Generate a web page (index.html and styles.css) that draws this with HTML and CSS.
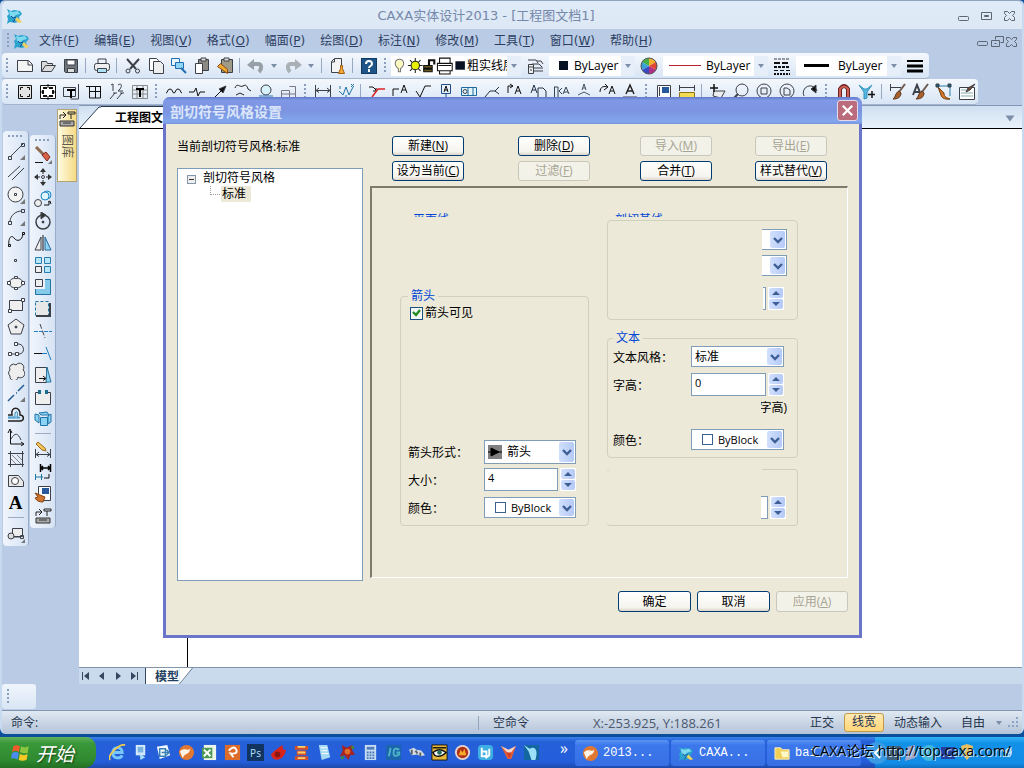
FILE: index.html
```html
<!DOCTYPE html>
<html lang="zh-CN">
<head>
    <meta charset="UTF-8">
    <meta name="viewport" content="width=device-width, initial-scale=1.0">
    <title>CAXA实体设计2013</title>
    <link rel="stylesheet" href="styles.css">
</head>
<body>

<!-- Shared shapes -->
<svg class="defs" aria-hidden="true">
    <symbol id="logo" viewBox="0 0 18 18">
        <path d="M1 2l4 2 3-1 6 1 2 3-3 3 1 4-5 2-5-1-3 2 1-5-1-3 2-2z" fill="#2aa3cf"/>
        <path d="M3 4l4 1 5-1 2 3-4 1-3 3-3-2z" fill="#7fd8ee"/>
        <path d="M5 9l2 2 3-1M9 12l-2 3" stroke="#134b8c" fill="none"/>
        <path d="M11 10l5 5-3 1-4-3z" fill="#f0d060"/>
    </symbol>
    <symbol id="down" viewBox="0 0 10 8"><path d="M1 2l4 4 4-4" stroke="#3d5f95" stroke-width="2.4" fill="none"/></symbol>
    <symbol id="caret" viewBox="0 0 8 6"><path d="M1 1h6L4 5z" fill="#7c8ea8"/></symbol>
    <symbol id="tri-up" viewBox="0 0 8 4"><path d="M0 4l4-4 4 4z" fill="#3d5f95"/></symbol>
    <symbol id="tri-down" viewBox="0 0 8 4"><path d="M0 0l4 4 4-4z" fill="#3d5f95"/></symbol>
    <symbol id="brush" viewBox="0 0 18 18"><path d="M16 1l-6 8" stroke="#6c5a50" stroke-width="2"/><path d="M10 8l2 2c0 4-3 6-8 6 3-2 2-6 6-8z" fill="#a8602c" stroke="#5a341a"/></symbol>
    <symbol id="folder" viewBox="0 0 18 18"><path d="M1 3h6l2 2h7v10H1z" fill="#f2cf55" stroke="#f8f0c0"/><path d="M7 7h8v6H9z" fill="#fff8c8"/></symbol>
    <symbol id="lib" viewBox="0 0 18 18"><path d="M2 9V5h5M5 2l3 3-3 3M10 2h7v2h-7zM13 4v5" stroke="#222"/><path d="M2 11h14v5H2z" fill="#aaa" stroke="#333"/><path d="M5 13h8" stroke="#333"/></symbol>
</svg>

<div class="app">
    <!-- Title bar -->
    <header class="titlebar">
        <svg class="icon"><use href="#logo"/></svg>
        <h1>CAXA实体设计2013 - [工程图文档1]</h1>
        <div class="win-buttons">
            <button aria-label="最小化"><svg class="icon" viewBox="0 0 18 18"><rect x="4.500" y="9.500" width="10" height="4" rx="1"/></svg></button>
            <button aria-label="还原"><svg class="icon" viewBox="0 0 18 18"><path d="M4.500 5.500h10v7h-10zM7.500 8.500h4v1h-4z"/></svg></button>
            <button aria-label="关闭"><svg class="icon" viewBox="0 0 18 18"><path d="M4.500 4.500h3l2 2 2-2h3v2l-2 2 2 2v3h-3l-2-2-2 2h-3v-3l2-2-2-2z"/></svg></button>
        </div>
    </header>

    <!-- Menu -->
    <nav class="menubar">
        <i class="grip"></i>
        <svg class="icon"><use href="#logo"/></svg>
        <button>文件(<u>F</u>)</button>
        <button>编辑(<u>E</u>)</button>
        <button>视图(<u>V</u>)</button>
        <button>格式(<u>O</u>)</button>
        <button>幅面(<u>P</u>)</button>
        <button>绘图(<u>D</u>)</button>
        <button>标注(<u>N</u>)</button>
        <button>修改(<u>M</u>)</button>
        <button>工具(<u>T</u>)</button>
        <button>窗口(<u>W</u>)</button>
        <button>帮助(<u>H</u>)</button>
        <div class="win-buttons small">
            <button aria-label="最小化文档"><svg class="icon" viewBox="2 1 15 15"><rect x="4.500" y="8.500" width="10" height="4" rx="1"/></svg></button>
            <button aria-label="还原文档"><svg class="icon" viewBox="2 1 15 15"><path d="M7.500 3.500h8v6h-3M7.500 3.500v3M3.500 7.500h8v6h-8zM6.500 10.500h2"/></svg></button>
            <button aria-label="关闭文档"><svg class="icon" viewBox="2 1 15 15"><path d="M3.500 4.500h3l2 2 2-2h3v2l-2 2 2 2v3h-3l-2-2-2 2h-3v-3l2-2-2-2z"/></svg></button>
        </div>
    </nav>

    <!-- Standard and property toolbars -->
    <div class="toolbar">
        <i class="grip"></i>
        <button class="tool" aria-label="新建"><svg class="icon" viewBox="0 0 18 18"><path d="M1.500 3.500h11l4 4v7h-15z" fill="#f4f4f4"/><path d="M12 4v4h4"/></svg></button>
        <button class="tool" aria-label="打开"><svg class="icon" viewBox="0 0 18 18"><path d="M2.500 14.500v-10h5l1 2h5v2M2.500 14.500l4-6h10l-4 6z" fill="#dcdcdc"/></svg></button>
        <button class="tool" aria-label="保存"><svg class="icon" viewBox="0 0 18 18"><path d="M2.500 2.500h13v13h-12l-1-1z" fill="#70757d"/><path d="M5 3h8v5H5z" fill="#fff"/><path d="M5.500 11.500h7v4h-7z" fill="#ddd"/></svg></button>
        <i class="sep"></i>
        <button class="tool" aria-label="打印"><svg class="icon" viewBox="0 0 18 18"><path d="M5 6V2h8v4"/><rect x="1.500" y="6.500" width="15" height="7" rx="2" fill="#eee"/><path d="M4.500 11.500h9v4h-9z" fill="#aee1f4"/></svg></button>
        <i class="sep"></i>
        <button class="tool" aria-label="剪切"><svg class="icon" viewBox="0 0 18 18"><path d="M3 2l9 10M15 2L6 12" stroke-width="2"/><circle cx="4" cy="14" r="2"/><circle cx="13.500" cy="14" r="2"/></svg></button>
        <button class="tool" aria-label="复制"><svg class="icon" viewBox="0 0 18 18"><path d="M2.500 1.500h7l2 2v10h-9z" fill="#fff"/><path d="M6.500 4.500h7l3 3v9h-10z" fill="#eee"/></svg></button>
        <button class="tool" aria-label="带基点复制"><svg class="icon" viewBox="0 0 18 18"><g stroke="#1e6eb4"><path d="M1.500 1.500h8v7h-8z" fill="#e8f6ff"/><path d="M5.500 5.500h8v6h-8z" fill="#8fd6f6"/><path d="M11 11l5 5" stroke-width="2"/></g></svg></button>
        <button class="tool" aria-label="粘贴"><svg class="icon" viewBox="0 0 18 18"><path d="M5.500 2.500h10v11h-10z" fill="#8d8a84"/><path d="M8 1h5v3H8z" fill="#ddd"/><path d="M2.500 6.500h7v10h-7z" fill="#fff"/></svg></button>
        <button class="tool" aria-label="选择性粘贴"><svg class="icon" viewBox="0 0 18 18"><path d="M5.500 2.500h11v13h-11z" fill="#a09a88"/><path d="M8 1h5v3H8z" fill="#ddd"/><path d="M1.500 9.500l3-3 7 6v4z" fill="#f0a830" stroke="#8a4a10"/></svg></button>
        <i class="sep"></i>
        <button class="tool" aria-label="撤销"><svg class="icon" viewBox="0 0 18 18"><path d="M3 7h8c4 0 4 5 1 8" stroke="#97a0a6" stroke-width="4"/><path d="M0 8l7-6v11z" fill="#97a0a6" stroke="none"/></svg></button>
        <button class="drop" aria-label="撤销列表"><svg><use href="#caret"/></svg></button>
        <button class="tool" aria-label="重做"><svg class="icon" viewBox="0 0 18 18"><path d="M15 7H7c-4 0-4 5-1 8" stroke="#a9b1b6" stroke-width="4"/><path d="M18 8l-7-6v11z" fill="#a9b1b6" stroke="none"/></svg></button>
        <button class="drop" aria-label="重做列表"><svg><use href="#caret"/></svg></button>
        <i class="sep"></i>
        <button class="tool" aria-label="格式刷"><svg class="icon" viewBox="0 0 18 18"><path d="M2.500 4.500l3-3h7v14h-10z" fill="#f4f4f4"/><path d="M5.500 2v3h-3"/><path d="M11.500 8.500h2v3l2 5h-6l2-5z" fill="#f3a83a" stroke="#a55f10"/></svg></button>
        <i class="sep"></i>
        <button class="tool" aria-label="帮助"><svg class="icon" viewBox="0 0 18 18"><rect x="1.500" y="1.500" width="15" height="15" fill="#1e5487" stroke="#123a62"/><path d="M6 7c0-4 6-4 6 0 0 2-3 2-3 4M9 12v3" stroke="#fff" stroke-width="2"/></svg></button>
        <i class="grip"></i>
        <div class="layer-box">
            <svg class="layer-icons" viewBox="0 0 72 18">
                <path d="M7 12C2 8 4 3 8 3s6 5 1 9v3H7z" fill="#fbf9c0" stroke="#777"/>
                <g stroke="#222"><path d="M23 2v14M16 9h14M18 4l10 10M28 4L18 14"/><circle cx="23" cy="9" r="4" fill="#e8f000"/></g>
                <path d="M31 9h8v6h-8z" fill="#6b5b20" stroke="#111"/><path d="M36 9V4h5v4M31 12h8" stroke="#111" stroke-width="2"/>
                <path d="M46 7V2h10v5M44 7h14v7H44zM46 14v3h10v-3" fill="#fff" stroke="#111"/><path d="M45 9h12" stroke="#111"/>
                <path d="M61 5h9v8h-9z" fill="#071122" stroke="none"/>
            </svg>
            <select aria-label="图层"><option>粗实线层</option></select>
            <span class="drop"><svg><use href="#caret"/></svg></span>
        </div>
        <button class="tool wide" aria-label="图层设置"><svg class="icon" viewBox="0 0 18 18"><path d="M2 3h8l2 3M6 7h7l3 3M8 11h9M8 14h9M11 4h4l2 3"/><path d="M2.500 7.500h5v9h-5zM2 10h6M4 13h2" fill="#eee"/></svg></button>
        <div class="prop-box color-box">
            <i class="swatch black"></i>
            <select aria-label="颜色"><option>ByLayer</option></select>
            <span class="drop"><svg><use href="#caret"/></svg></span>
        </div>
        <button class="tool wide" aria-label="颜色"><svg class="icon" viewBox="0 0 18 18"><g stroke="none"><path d="M9 9V1a8 8 0 0 1 7 4z" fill="#f0b030"/><path d="M9 9l7-4a8 8 0 0 1 0 8z" fill="#e04a32"/><path d="M9 9l7 4a8 8 0 0 1-7 4z" fill="#b03088"/><path d="M9 9v8a8 8 0 0 1-7-4z" fill="#3a4ac0"/><path d="M9 9l-7 4a8 8 0 0 1 0-8z" fill="#3aa0d8"/><path d="M9 9L2 5a8 8 0 0 1 7-4z" fill="#48b048"/></g><circle cx="9" cy="9" r="8" stroke="#555"/></svg></button>
        <div class="prop-box">
            <i class="line red"></i>
            <select aria-label="线型"><option>ByLayer</option></select>
            <span class="drop"><svg><use href="#caret"/></svg></span>
        </div>
        <button class="tool wide" aria-label="线型"><svg class="icon" viewBox="0 0 18 18"><path d="M1 2h16" stroke-dasharray="3 1"/><path d="M1 6h16" stroke="#111" stroke-width="2" stroke-dasharray="6 2"/><path d="M1 10h16" stroke="#111" stroke-width="2" stroke-dasharray="3 1"/><path d="M1 13.500h16" stroke="#111" stroke-dasharray="4 2"/><path d="M1 17h16" stroke="#111" stroke-width="2" stroke-dasharray="2 1"/></svg></button>
        <div class="prop-box">
            <i class="line thick"></i>
            <select aria-label="线宽"><option>ByLayer</option></select>
            <span class="drop"><svg><use href="#caret"/></svg></span>
        </div>
        <button class="tool wide" aria-label="线宽"><svg class="icon" viewBox="0 0 18 18"><g stroke="#000"><path d="M1 4h16" stroke-width="2"/><path d="M1 9h16" stroke-width="3"/><path d="M1 14h16" stroke-width="3"/></g></svg></button>
    </div>

    <!-- Drawing frame, curves and dimension toolbars -->
    <div class="toolbar">
        <i class="grip"></i>
        <button class="tool" aria-label="图幅"><svg class="icon" viewBox="0 0 18 18"><path d="M2.500 2.500h13v13h-13z" fill="#e4e4e4" stroke="#111"/><path d="M4.500 7V4.500H7M11 4.500h2.500V7M13.500 11v2.500H11M7 13.500H4.500V11" stroke="#111"/></svg></button>
        <button class="tool" aria-label="图框"><svg class="icon" viewBox="0 0 18 18"><path d="M1.500 2.500h15v13h-15z" fill="#fff" stroke="#111"/><path d="M4 5h10v8H4z" stroke="#111" stroke-width="2" stroke-dasharray="4 2"/><path d="M9 1v4M9 13v4M1 9h3M14 9h3" stroke="#111"/></svg></button>
        <button class="tool" aria-label="标题栏"><svg class="icon" viewBox="0 0 18 18"><path d="M1.500 4.500h12v9h-12zM16.500 1v15h-8"/><path d="M5 7h8M9 7v8" stroke="#000" stroke-width="2"/></svg></button>
        <button class="tool" aria-label="参数栏"><svg class="icon" viewBox="0 0 18 18"><path d="M1 3.500h15M4.500 4v11h11V4M10.500 4v11M4 8.500h12" stroke="#111"/></svg></button>
        <button class="tool" aria-label="序号"><svg class="icon" viewBox="0 0 18 18"><path d="M3 2l2-1v7M10 2c4-3 5 2 0 6h5M7 10l-5 6M14 10l-5 6M5 10h4M12 10h4"/></svg></button>
        <button class="tool" aria-label="明细表"><svg class="icon" viewBox="0 0 18 18"><path d="M1.500 2.500h15v13h-15zM1 7h15M1 11h15M6 3v12M12 3v12" stroke="#8a8a8a"/><path d="M5 6h8M9 6v8" stroke="#000" stroke-width="2"/></svg></button>
        <i class="grip"></i>
        <button class="tool" aria-label="波浪线"><svg class="icon" viewBox="0 0 18 18"><path d="M1 10c2 0 1-4 4-4s2 4 4 4 1-4 4-4 2 4 4 4" stroke="#111"/></svg></button>
        <button class="tool" aria-label="双折线"><svg class="icon" viewBox="0 0 18 18"><path d="M1 9h5l2-4 2 8 2-4h5" stroke="#111"/></svg></button>
        <button class="tool" aria-label="箭头"><svg class="icon" viewBox="0 0 18 18"><path d="M3 15l7-7" stroke="#111"/><path d="M15 3l-3 7-4-4z" fill="#111"/></svg></button>
        <button class="tool" aria-label="齿轮"><svg class="icon" viewBox="0 0 18 18"><path d="M1 5c2-6 5 0 8-2s4 0 5 3l3 2M2 12l4-2 4 2" stroke="#222"/></svg></button>
        <button class="tool" aria-label="圆弧"><svg class="icon" viewBox="0 0 18 18"><circle cx="9" cy="7" r="5" fill="#d8f2fc"/><path d="M2 13h14" stroke="#287ab5"/></svg></button>
        <button class="tool" aria-label="孔轴"><svg class="icon" viewBox="0 0 18 18"><path d="M1.500 7.500h8v7h-8zM9.500 3.500h6v12h-6M1 11h15" stroke="#778"/></svg></button>
        <i class="grip"></i>
        <button class="tool" aria-label="尺寸标注"><svg class="icon" viewBox="0 0 18 18"><path d="M1.500 2v14M16.500 2v14M2 7.500h14M5 5L2 7.500l3 2M13 5l3 2.500-3 2"/></svg></button>
        <button class="tool" aria-label="坐标标注"><svg class="icon" viewBox="0 0 18 18"><path d="M2 8l4 4 3-8 3 8 4-8M3 3v3M9 12v4M14 1l3 3M17 1l-3 3" stroke="#2273a4"/></svg></button>
        <i class="sep"></i>
        <button class="tool" aria-label="倒角标注"><svg class="icon" viewBox="0 0 18 18"><path d="M1 4h4l4 4M8 5v3H5" stroke="#111"/><path d="M4 14l6-8h7" stroke="#d22" stroke-width="1.500"/></svg></button>
        <button class="tool" aria-label="引出说明"><svg class="icon" viewBox="0 0 18 18"><path d="M2 13V6h6M10 10l3-8 3 8M11 7h4" stroke="#111"/></svg></button>
        <button class="tool" aria-label="粗糙度"><svg class="icon" viewBox="0 0 18 18"><path d="M2 8l4 6 5-11h6" stroke="#111"/></svg></button>
        <button class="tool" aria-label="基准代号"><svg class="icon" viewBox="0 0 18 18"><path d="M4.500 1.500h9v9h-9zM9 11v4M5 15h8" stroke="#1f4e87"/><path d="M7 9l2-6 2 6M7 7h4" stroke="#111"/></svg></button>
        <button class="tool" aria-label="形位公差"><svg class="icon" viewBox="0 0 18 18"><path d="M1.500 4.500h15v8h-15zM8 5v8M13 5v8" stroke="#1f6a9c" fill="#e2f4fc"/><circle cx="5" cy="8.500" r="2"/></svg></button>
        <button class="tool" aria-label="焊接符号"><svg class="icon" viewBox="0 0 18 18"><path d="M2 14l5-6h5l4-4M12 8l4 3" stroke="#234"/></svg></button>
        <button class="tool" aria-label="剖切符号"><svg class="icon" viewBox="0 0 18 18"><path d="M2 10V3h5M4 1l3 2-3 2M9 11l3-8 3 8M10 8h4" stroke="#111"/></svg></button>
        <button class="tool" aria-label="向视符号"><svg class="icon" viewBox="0 0 18 18"><path d="M2 10l3-8 3 8M3 7h4M9 5h5l3 3v7H9z" stroke="#234"/></svg></button>
        <button class="tool" aria-label="局部放大"><svg class="icon" viewBox="0 0 18 18"><path d="M2.500 4v10M2 4h4v10M10 5l-3 3 3 3M11 11l3-7 3 7M12 9h4" stroke="#345"/></svg></button>
        <button class="tool" aria-label="中心孔"><svg class="icon" viewBox="0 0 18 18"><path d="M7 7l2-6 2 6M8 5h3M3 12l6-3 6 3" stroke="#456"/></svg></button>
        <button class="tool" aria-label="旋转标注"><svg class="icon" viewBox="0 0 18 18"><path d="M2 9c0-6 5-6 7-5M7 1l3 3-4 3M11 11l3-8 3 8M12 8h4" stroke="#111"/></svg></button>
        <button class="tool" aria-label="文字"><svg class="icon" viewBox="0 0 18 18"><path d="M5 11l4-9 4 9M6 8h6" stroke="#222" stroke-width="1.500"/><path d="M2 14h14"/></svg></button>
        <i class="grip"></i>
        <button class="tool" aria-label="样式管理"><svg class="icon" viewBox="0 0 18 18"><path d="M2.500 2.500h13v13h-13z" fill="#fff"/><path d="M7 4h7v6H7z" fill="#245a9c" stroke="none"/><path d="M4.500 4v9"/></svg></button>
        <button class="tool" aria-label="尺寸样式"><svg class="icon" viewBox="0 0 18 18"><path d="M1.500 2v6M16.500 2v6M2 4.500h14"/><path d="M1.500 9.500h15v6h-15z" fill="#f2dc54" stroke="#8d7314"/></svg></button>
        <i class="sep"></i>
        <button class="tool" aria-label="平移"><svg class="icon" viewBox="0 0 18 18"><path d="M5 8h11l-4 7-8-2z" fill="#eee"/><path d="M5 1v8M1 5h8" stroke="#111" stroke-width="1.500"/></svg></button>
        <button class="tool" aria-label="显示窗口"><svg class="icon" viewBox="0 0 18 18"><circle cx="10" cy="7" r="6"/><path d="M6 11l-5 5" stroke-width="2"/></svg></button>
        <button class="tool" aria-label="显示全部"><svg class="icon" viewBox="0 0 18 18"><circle cx="9" cy="8" r="7"/><path d="M6 5h6v6H6z"/></svg></button>
        <button class="tool" aria-label="显示上一步"><svg class="icon" viewBox="0 0 18 18"><circle cx="9" cy="8" r="7"/><path d="M6 12V5h3l3 2v5z"/></svg></button>
        <button class="tool" aria-label="重生成"><svg class="icon" viewBox="0 0 18 18"><path d="M3 13A7 7 0 1 1 16 8"/><path d="M15 2v8l-5-4z" fill="#111"/></svg></button>
        <i class="grip"></i>
        <button class="tool" aria-label="捕捉"><svg class="icon" viewBox="0 0 18 18"><path d="M5 15V6q4-6 8 0v9" stroke="#6c2320" stroke-width="4"/><path d="M5 14V6q4-5 8 0v8" stroke="#ce6055" stroke-width="2"/></svg></button>
        <button class="tool" aria-label="拾取过滤"><svg class="icon" viewBox="0 0 18 18"><path d="M1 2l5 7v7l3-1V9l5-7-5 4H6z" fill="#59b9e0" stroke="#2f8fbe"/><path d="M14 8v7M10 11.500h7" stroke="#111" stroke-width="1.500"/></svg></button>
        <i class="sep"></i>
        <button class="tool" aria-label="尺寸刷"><svg class="icon" viewBox="0 0 18 18"><path d="M1.500 1v7M2 4.500h10"/><use href="#brush"/></svg></button>
        <button class="tool" aria-label="文字刷"><svg class="icon" viewBox="0 0 18 18"><path d="M1 12L5 2l4 10M3 9h4" stroke-width="2"/><use href="#brush"/></svg></button>
        <button class="tool" aria-label="样式刷"><svg class="icon" viewBox="0 0 18 18"><path d="M2 3h13v10" stroke="#2a7da5"/><path d="M1 1h3v3H1zM13 1h3v3h-3z" fill="#16617d"/><path d="M3 4l6 6c0 4 3 5 6 6-6 1-9-2-9-4z" fill="#d2762a" stroke="#70400f"/></svg></button>
        <button class="tool" aria-label="属性"><svg class="icon" viewBox="0 0 18 18"><path d="M1.500 4.500h15v12h-15z" fill="#fff"/><path d="M3 7h5M3 10h12M3 13h12" stroke="#8aa"/><path d="M17 1l-5 6-4 2 2-4z" fill="#7b4a30"/></svg></button>
    </div>

    <!-- Workspace -->
    <main class="workspace">
        <aside class="dock">
            <div class="tool-column first">
                <i class="grip flat"></i>
                <button aria-label="直线"><svg class="icon" viewBox="0 0 18 18"><path d="M3 15L16 2M14.500 1.500h3v3h-3zM1.500 14.500h3v3h-3z"/><path d="M18 13v5h-5z" fill="#777" stroke="none"/></svg></button>
                <button aria-label="平行线"><svg class="icon" viewBox="0 0 18 18"><path d="M1 13L13 2M5 16L17 4"/></svg></button>
                <button aria-label="圆"><svg class="icon" viewBox="0 0 18 18"><circle cx="8.500" cy="8.500" r="7.500" fill="#f3f3f3"/><path d="M7.500 7.500h2v2h-2z"/><path d="M18 13v5h-5z" fill="#777" stroke="none"/></svg></button>
                <button aria-label="圆弧"><svg class="icon" viewBox="0 0 18 18"><path d="M3 14C3 8 8 3 15 3M14.500 1.500h3v3h-3zM1.500 13.500h3v3h-3z"/><path d="M18 13v5h-5z" fill="#777" stroke="none"/></svg></button>
                <button aria-label="样条"><svg class="icon" viewBox="0 0 18 18"><path d="M2 15C1 9 4 4 7 8s8 3 9-4M1.500 14.500h2v2h-2zM15.500 2.500h2v2h-2z" stroke="#111"/></svg></button>
                <button aria-label="点"><svg class="icon" viewBox="0 0 18 18"><path d="M7.500 7.500h2v2h-2z"/></svg></button>
                <button aria-label="椭圆"><svg class="icon" viewBox="0 0 18 18"><ellipse cx="9" cy="9" rx="7" ry="5" fill="#f1f1f1"/><path d="M.5 7.500h3v3h-3zM14.500 7.500h3v3h-3zM7.500 2.500h3v2h-3zM7.500 13.500h3v2h-3z" fill="#fff"/></svg></button>
                <button aria-label="矩形"><svg class="icon" viewBox="0 0 18 18"><path d="M2.500 4.500h13v10h-13z" fill="#eee"/><path d="M14.500 2.500h3v3h-3zM1.500 13.500h3v3h-3z" fill="#fff"/></svg></button>
                <button aria-label="正多边形"><svg class="icon" viewBox="0 0 18 18"><path d="M9 1l8 6-3 9H4L1 7z" fill="#eee"/><circle cx="9" cy="9" r="1" fill="#333"/></svg></button>
                <button aria-label="多段线"><svg class="icon" viewBox="0 0 18 18"><path d="M3 14h9c6 0 6-9 0-10H9"/><path d="M1.500 12.500h3v3h-3zM8.500 12.500h3v3h-3zM7.500 2.500h3v3h-3z" fill="#fff"/></svg></button>
                <button aria-label="云线"><svg class="icon" viewBox="0 0 18 18"><path d="M9 3a4 4 0 0 1 7 5 4 4 0 0 1-5 7 4 4 0 0 1-8-1 4 4 0 0 1 0-6 4 4 0 0 1 6-5z" fill="#eee"/></svg></button>
                <button aria-label="中心线"><svg class="icon" viewBox="0 0 18 18"><path d="M1 17l6-6M9 9h1M11 7l6-6" stroke="#235b94" stroke-width="1.500"/><path d="M18 13v5h-5z" fill="#777" stroke="none"/></svg></button>
                <button aria-label="等距线"><svg class="icon" viewBox="0 0 18 18"><path d="M1 15h12c5 0 4-6 0-6 1-9-10-9-8 0H1" stroke="#222" stroke-width="1.500"/><path d="M1 12h11c2 0 1-1-2-1 2-7-3-7-2 0H1" stroke="#268ac0"/></svg></button>
                <button aria-label="公式曲线"><svg class="icon" viewBox="0 0 18 18"><path d="M3.500 3v13h13M1 5l2-4 2 4M14 14l3 2-3 2" stroke="#111"/><path d="M4 11c4-7 7-6 10 1"/></svg></button>
                <button aria-label="剖面线"><svg class="icon" viewBox="0 0 18 18"><path d="M3.500 1v16M15.500 1v16M1 3.500h16M1 14.500h16"/><path d="M4 9l5 5M5 5l9 9M10 5l5 5" stroke="#888"/></svg></button>
                <button aria-label="填充"><svg class="icon" viewBox="0 0 18 18"><path d="M1.500 3.500h10l5 6v5h-15z" fill="#e8e8e8"/><circle cx="8" cy="9" r="3.500" fill="#fff"/></svg></button>
                <button class="letter" aria-label="文字">A</button>
                <i class="hr"></i>
                <button aria-label="局部放大图"><svg class="icon" viewBox="0 0 18 18"><path d="M5.500 3.500h10v8h-10z" fill="#eee"/><circle cx="4" cy="11" r="3" fill="#ddd"/><path d="M7 12h7M13.500 10.500h3v3h-3z"/><path d="M18 14v4h-4z" fill="#777" stroke="none"/></svg></button>
            </div>
            <div class="tool-column second">
                <i class="grip flat"></i>
                <button aria-label="删除"><svg class="icon" viewBox="0 0 18 18"><path d="M2 1l9 9" stroke="#8b6c50" stroke-width="3"/><path d="M8 9l4-3 4 5-3 4z" fill="#d96048" stroke="#7a2a18"/><path d="M1 16.500h8" stroke="#111"/><path d="M18 14v4h-4z" fill="#777" stroke="none"/></svg></button>
                <button aria-label="平移"><svg class="icon" viewBox="0 0 18 18"><path d="M9 1v5M9 12v5M1 9h5M12 9h5" stroke="#222"/><path d="M9 0l3 4H6zM9 18l3-4H6zM0 9l4-3v6zM18 9l-4-3v6z" fill="#333" stroke="none"/><circle cx="9" cy="9" r="1.500"/></svg></button>
                <button aria-label="平移复制"><svg class="icon" viewBox="0 0 18 18"><circle cx="4" cy="13" r="3.500" fill="#eee"/><circle cx="13" cy="5" r="4" fill="#bfe8fa" stroke="#2285c4"/><circle cx="11" cy="6" r="4" fill="#dff4fd" stroke="#2285c4"/><path d="M10 15h5v-3M14 12l2-1 1 3" stroke="#111"/></svg></button>
                <button aria-label="旋转"><svg class="icon" viewBox="0 0 18 18"><circle cx="9" cy="10" r="7" stroke-width="1.500"/><path d="M7 0l5 3-5 4z" fill="#333"/><circle cx="9" cy="10" r="1" fill="#111"/></svg></button>
                <button aria-label="镜像"><svg class="icon" viewBox="0 0 18 18"><path d="M7 3v13H1z" fill="#eee"/><path d="M11 3v13h6z" fill="#92d3f2" stroke="#226a9e"/><path d="M9 1v16" stroke="#111"/></svg></button>
                <button aria-label="阵列"><svg class="icon" viewBox="0 0 18 18"><path d="M1.500 1.500h6v6h-6zM10.500 1.500h6v6h-6zM10.500 10.500h6v6h-6z" fill="#b6e6fa" stroke="#267dac"/><path d="M1.500 10.500h6v6h-6z" fill="#eee"/></svg></button>
                <button aria-label="缩放"><svg class="icon" viewBox="0 0 18 18"><path d="M1.500 1.500h15v15h-15z" fill="#85cbe9" stroke="#2273a2"/><path d="M1 1h10v10H1z" fill="#edf1f8" stroke="none"/><path d="M1.500 1.500h7v7h-7z" fill="#eee"/></svg></button>
                <button aria-label="拉伸"><svg class="icon" viewBox="0 0 18 18"><path d="M1.500 1.500h13v14h-13z" fill="#e8e8e8" stroke="#1f75a5" stroke-dasharray="3 2"/><path d="M2 16h14V3" stroke-width="2"/></svg></button>
                <button aria-label="裁剪"><svg class="icon" viewBox="0 0 18 18"><path d="M0 9.500h18" stroke="#2082c0" stroke-dasharray="4 1"/><path d="M6 2l5 14" stroke="#444" stroke-dasharray="5 2"/></svg></button>
                <button aria-label="延伸"><svg class="icon" viewBox="0 0 18 18"><path d="M0 9.500h8" stroke="#111"/><path d="M8 9.500h5M12 3l5 13" stroke="#207bc0"/></svg></button>
                <button aria-label="过渡"><svg class="icon" viewBox="0 0 18 18"><path d="M1.500 1.500h11v15h-11z" fill="#eee"/><path d="M13 1l4 15h-5z" fill="#8cd2f0" stroke="#2672a0"/><path d="M5 12.500h6M9 10l3 2.500-3 2" stroke="#111"/></svg></button>
                <button aria-label="打断"><svg class="icon" viewBox="0 0 18 18"><path d="M5 4.500H1.500v12h15v-12H13" fill="#eee"/><path d="M4 2h3v4H4zM11 2h3v4h-3z" fill="#206c8c" stroke="none"/></svg></button>
                <button aria-label="分解"><svg class="icon" viewBox="0 0 18 18"><path d="M1 4l4 1v8l-4-3zM5 3l8-1 2 3H7zM14 6l3-2v8l-3 2zM6.500 7.500h7v8h-7z" fill="#8bd2f3" stroke="#2074a8"/></svg></button>
                <i class="hr"></i>
                <button aria-label="标注编辑"><svg class="icon" viewBox="0 0 18 18"><path d="M1.500 8v9M16.500 8v9M2 13.500h14M5 11l-3 2.500 3 2M13 11l3 2.500-3 2"/><path d="M4 1l7 6 1 3-4-1-6-6z" fill="#f4c45c" stroke="#9a6c20"/></svg></button>
                <button aria-label="标注间距"><svg class="icon" viewBox="0 0 18 18"><path d="M6.500 1v8M16.500 1v8M7 5h9M9 3L7 5l2 2M14 3l2 2-2 2" stroke="#000" stroke-width="1.500"/><path d="M1.500 11v6M7.500 11v6M1 14h8" stroke="#2374a0"/><path d="M10 15h5v-4" stroke="#111"/></svg></button>
                <button aria-label="样式刷"><svg class="icon" viewBox="0 0 18 18"><path d="M4.500 1.500h12v14h-12z" fill="#fff"/><path d="M8 3h7v6H8z" fill="#28599a" stroke="none"/><path d="M1 8l5 2 5 2-2 5c-4 0-6-1-8-4l3-1z" fill="#ce742d" stroke="#884515"/></svg></button>
                <button aria-label="图库"><svg class="icon"><use href="#lib"/></svg></button>
            </div>
            <button class="library-tab"><svg class="icon"><use href="#lib"/></svg><span>图库</span></button>
        </aside>

        <section class="document">
            <div class="doc-tabs">
                <svg class="doc-slope" viewBox="0 0 22 22"><path d="M0 22L20 1h2v21z" fill="#fff" stroke="none"/><path d="M1 22L20 1h2" stroke="#27374f" fill="none"/></svg>
                <span class="doc-tab">工程图文档1</span>
                <button class="drop" aria-label="文档列表"><svg><use href="#caret"/></svg></button>
            </div>
            <div class="canvas"><i class="axis"></i></div>
            <div class="sheet-tabs">
                <button aria-label="第一页"><svg viewBox="0 0 10 10"><path d="M1 1h1v8H1zM8 1v8L3 5z"/></svg></button>
                <button aria-label="上一页"><svg viewBox="0 0 10 10"><path d="M7 1v8L2 5z"/></svg></button>
                <button aria-label="下一页"><svg viewBox="0 0 10 10"><path d="M3 1v8l5-4z"/></svg></button>
                <button aria-label="最后一页"><svg viewBox="0 0 10 10"><path d="M2 1v8l5-4zM8 1h1v8H8z"/></svg></button>
                <span class="sheet">模型</span>
                <svg class="sheet-slope" viewBox="0 0 14 17"><path d="M0 0h13L0 17z" fill="#fff"/><path d="M14 0L0 17" stroke="#6e8093"/></svg>
            </div>
        </section>
        <div class="command-grip"><i class="grip"></i></div>
    </main>

    <!-- Status bar -->
    <footer class="statusbar">
        <span class="command">命令:</span>
        <span class="hint">空命令</span>
        <span class="coords">X:-253.925, Y:188.261</span>
        <div class="modes">
            <button>正交</button>
            <button class="active">线宽</button>
            <button>动态输入</button>
            <button>自由</button>
            <svg class="caret"><use href="#caret"/></svg>
            <svg class="resize" viewBox="0 0 12 12"><path d="M8 0h2v2H8zM8 4h2v2H8zM8 8h2v2H8zM4 4h2v2H4zM4 8h2v2H4zM0 8h2v2H0z" fill="#8ba3c4"/></svg>
        </div>
    </footer>
</div>

<!-- Windows taskbar -->
<div class="taskbar">
    <button class="start"><svg viewBox="0 0 18 18"><path d="M2 3q3-2 6 0L7 8q-3-2-6 0z" fill="#f25a2c"/><path d="M9 3q3 2 7 0l-1 6q-4 1-7-1z" fill="#8cc63e"/><path d="M1 9q3-2 6 0l-1 6q-3-2-6-1z" fill="#4a8cf0"/><path d="M8 10q4 2 7 0l-1 5q-4 2-7 0z" fill="#fbc926"/></svg>开始</button>
    <div class="quick">
        <button aria-label="浏览器"><svg viewBox="0 0 18 18"><path d="M4 9h10c0-7-10-7-10 0s8 7 10 3" fill="none" stroke="#78c8fa" stroke-width="3"/><path d="M1 17C-2 12 10 0 17 1" fill="none" stroke="#e8c850" stroke-width="2"/></svg></button>
        <button aria-label="桌面"><svg viewBox="0 0 18 18"><path d="M4 1h10v11H4z" fill="#d6ebfa"/><path d="M6 3h6v6H6z" fill="#7ab3e2"/><path d="M8 10l6 4-5 3z" fill="#a8dcf8"/></svg></button>
        <button aria-label="邮件"><svg viewBox="0 0 18 18"><path d="M2 3l11-2 3 11-11 4z" fill="#f2f8fd"/><path d="M5 5h6v8H5zM7 9h8M12 6l3 3-3 3" fill="none" stroke="#3980b4" stroke-width="1.500"/></svg></button>
        <button aria-label="极速浏览器"><svg viewBox="0 0 18 18"><circle cx="9" cy="9" r="8" fill="#e07832"/><path d="M2 8c5-5 8 0 11-3-1 7-6 4-8 10z" fill="#fff3e6"/></svg></button>
        <button aria-label="表格"><svg viewBox="0 0 18 18"><path d="M3 1h13v16H3z" fill="#edf5e9"/><path d="M1 4h11v11H1z" fill="#4c9a55"/><path d="M3 6l7 7M10 6l-7 7" stroke="#fff" stroke-width="2"/></svg></button>
        <button aria-label="影音"><svg viewBox="0 0 18 18"><path d="M1 1h16v16H1z" fill="#dd6c28"/><path d="M5 7q6-6 8-1t-6 4l3 4" fill="none" stroke="#fff" stroke-width="2"/></svg></button>
        <button class="ps">Ps</button>
        <button aria-label="播放"><svg viewBox="0 0 18 18"><path d="M4 8l9-7 1 5h3c-2 12-14 14-16 5z" fill="#d9231b"/><circle cx="8" cy="11" r="3" fill="#8a1710"/></svg></button>
        <button aria-label="邮箱"><svg viewBox="0 0 18 18"><path d="M2 2h14v4H2zM4 7h10v5H4zM2 13h14v4H2z" fill="#d4502a"/><path d="M5 3h8M5 9h8M5 15h8" stroke="#f9d36a" stroke-width="2"/></svg></button>
        <button aria-label="记事本"><svg viewBox="0 0 18 18"><path d="M3 1h9l3 13-9 3z" fill="#a5daf2"/><path d="M5 4h7M6 7h6M6 10h7" stroke="#fff"/></svg></button>
        <button aria-label="花朵"><svg viewBox="0 0 18 18"><path d="M3 1l5 3 6-3v6l3 4-5 1-2 5-4-5-5 1 3-6z" fill="#a82420"/><circle cx="9" cy="8" r="3" fill="#e2702a"/><path d="M2 13h3v3H2zM13 2h3v3h-3z" fill="#3f8a37"/></svg></button>
        <button aria-label="计算器"><svg viewBox="0 0 18 18"><path d="M3 1h12v16H3z" fill="#c5dcf2"/><path d="M5 3h8v3H5z" fill="#517dbb"/><path d="M5 9h8M5 12h8M5 15h8" stroke="#4a78b8" stroke-width="2" stroke-dasharray="2 1"/></svg></button>
        <button aria-label="图形"><svg viewBox="0 0 18 18"><path d="M1 1h16v16H1z" fill="#1b65ad"/><path d="M6 4L4 13M15 6q-6-3-6 3t6 2V9h-3" fill="none" stroke="#4eb2c8" stroke-width="2"/></svg></button>
        <button aria-label="工具"><svg viewBox="0 0 18 18"><path d="M1 6l5-2 3 2 5 1 4 5-5 1-3-2-6 1z" fill="#d5dbe0"/><path d="M4 6v5M8 7l2 3M13 9v4" stroke="#59636c" stroke-width="2"/></svg></button>
        <button aria-label="看图"><svg viewBox="0 0 18 18"><path d="M1 1h16v16H1z" fill="#e9b83a" stroke="#111"/><path d="M2 9q7-6 14 0-6 6-12 3z" fill="#fff" stroke="#111" stroke-width="1.500"/><circle cx="9" cy="9" r="2.500" fill="#246e5a"/><path d="M2 4h14" stroke="#111" stroke-width="1.500"/></svg></button>
        <button aria-label="刻录"><svg viewBox="0 0 18 18"><circle cx="9" cy="9" r="8" fill="#e6d6d0"/><circle cx="9" cy="9" r="6" fill="#b03018"/><path d="M5 12l2-6 2 3 2-4 2 7z" fill="#f6ab28"/></svg></button>
        <button aria-label="管家"><svg viewBox="0 0 18 18"><rect x="1" y="1" width="16" height="16" rx="4" fill="#3eafe2"/><path d="M5 4v9h5V8H5M13 5v7l-4 3" fill="none" stroke="#fff" stroke-width="2"/></svg></button>
        <button aria-label="下载"><svg viewBox="0 0 18 18"><path d="M1 2l8 4 8-4-5 14H8z" fill="#e35b38"/><path d="M1 2l8 4 8-4-7 9z" fill="#f3dace"/><path d="M7 9h5l-2 6z" fill="#ce3c24"/></svg></button>
        <button aria-label="鸟"><svg viewBox="0 0 18 18"><path d="M1 1h16v16H1z" fill="#13679f"/><path d="M1 1l6 4c7-4 9 4 6 12H9L6 8z" fill="#9be0f9"/></svg></button>
        <span class="more">»</span>
    </div>
    <button class="task"><svg viewBox="0 0 18 18"><circle cx="9" cy="9" r="8" fill="#e07832"/><path d="M2 8c5-5 8 0 11-3-1 7-6 4-8 10z" fill="#fff3e6"/></svg>2013...</button>
    <button class="task"><svg><use href="#logo"/></svg>CAXA...</button>
    <button class="task"><svg><use href="#folder"/></svg>bai</button>
    <div class="tray">
        <svg viewBox="0 0 104 30">
            <circle cx="2" cy="15" r="11" fill="#3a9ae4"/><path d="M5 10l-5 5 5 5" stroke="#fff" stroke-width="2" fill="none"/>
            <path d="M12 8h14v14H12z" fill="#40627f"/><path d="M32 9l8-2v13l-10 3z" fill="#a3a8c8"/>
            <circle cx="54" cy="15" r="8" fill="#43b8dd"/><path d="M66 9h14v12H66z" fill="#2340a0"/><path d="M86 8l6-2 6 2q0 9-6 14-6-6-6-14z" fill="#e4c060"/>
        </svg>
        <span>:9</span>
    </div>
    <div class="watermark">CAXA论坛 http://top.caxa.com/</div>
</div>

<!-- Section symbol style dialog -->
<div class="dialog" role="dialog" aria-labelledby="dialog-title">
    <div class="dialog-title">
        <h2 id="dialog-title">剖切符号风格设置</h2>
        <button class="close" aria-label="关闭"><svg viewBox="0 0 18 18"><path d="M4 4l10 10M14 4L4 14" stroke="#fff" stroke-width="2.400"/></svg></button>
    </div>
    <div class="dialog-body">
        <div class="style-list">
            <p>当前剖切符号风格:标准</p>
            <ul class="tree">
                <li><button class="toggle" aria-label="折叠"></button>剖切符号风格
                    <ul><li><span class="selected">标准</span></li></ul>
                </li>
            </ul>
        </div>
        <div class="settings">
            <div class="actions">
                <button class="button">新建(<u>N</u>)</button>
                <button class="button">删除(<u>D</u>)</button>
                <button class="button" disabled>导入(<u>M</u>)</button>
                <button class="button" disabled>导出(<u>E</u>)</button>
                <button class="button">设为当前(<u>C</u>)</button>
                <button class="button" disabled>过滤(<u>F</u>)</button>
                <button class="button">合并(<u>T</u>)</button>
                <button class="button">样式替代(<u>V</u>)</button>
            </div>
            <div class="panel">
                <div class="column">
                    <div class="cut-title">平面线</div>
                    <fieldset class="arrow-group">
                        <legend>箭头</legend>
                        <label class="check"><input type="checkbox" checked><svg viewBox="0 0 13 13"><path d="M3 5l3 3 4-5" stroke="#218a21" stroke-width="2.400" fill="none"/></svg>箭头可见</label>
                        <div class="field">
                            <label for="arrow-type">箭头形式：</label>
                            <div class="combo tall"><svg class="arrow-pic" viewBox="0 0 14 14"><path d="M0 0h14v14H0z" fill="#808080"/><path d="M0 7h14M3 3l8 4-8 4z" fill="#000" stroke="#000"/></svg><select id="arrow-type"><option>箭头</option></select><span class="combo-arrow"><svg><use href="#down"/></svg></span></div>
                        </div>
                        <div class="field">
                            <label for="arrow-size">大小：</label>
                            <div class="spin"><input type="text" id="arrow-size" value="4"><div class="spin-buttons"><button aria-label="增大"><svg><use href="#tri-up"/></svg></button><button aria-label="减小"><svg><use href="#tri-down"/></svg></button></div></div>
                        </div>
                        <div class="field last">
                            <label for="arrow-color">颜色：</label>
                            <div class="combo color"><i class="swatch"></i><select id="arrow-color"><option>ByBlock</option></select><span class="combo-arrow"><svg><use href="#down"/></svg></span></div>
                        </div>
                    </fieldset>
                </div>
                <div class="column">
                    <div class="cut-title">剖切基线</div>
                    <fieldset class="base-group">
                        <div class="combo cut"><select aria-label="基线样式"></select><span class="combo-arrow"><svg><use href="#down"/></svg></span></div>
                        <div class="combo cut"><select aria-label="基线颜色"></select><span class="combo-arrow"><svg><use href="#down"/></svg></span></div>
                        <div class="spin cut"><input type="text" aria-label="基线长度"><div class="spin-buttons"><button aria-label="增大"><svg><use href="#tri-up"/></svg></button><button aria-label="减小"><svg><use href="#tri-down"/></svg></button></div></div>
                    </fieldset>
                    <fieldset class="text-group">
                        <legend>文本</legend>
                        <div class="field">
                            <label for="text-style">文本风格：</label>
                            <div class="combo"><select id="text-style"><option>标准</option></select><span class="combo-arrow"><svg><use href="#down"/></svg></span></div>
                        </div>
                        <div class="field">
                            <label for="text-height">字高：</label>
                            <div class="spin"><input type="text" id="text-height" value="0"><div class="spin-buttons"><button aria-label="增大"><svg><use href="#tri-up"/></svg></button><button aria-label="减小"><svg><use href="#tri-down"/></svg></button></div></div>
                        </div>
                        <p class="note">字高)</p>
                        <div class="field">
                            <label for="text-color">颜色：</label>
                            <div class="combo color"><i class="swatch"></i><select id="text-color"><option>ByBlock</option></select><span class="combo-arrow"><svg><use href="#down"/></svg></span></div>
                        </div>
                    </fieldset>
                    <fieldset class="offset-group">
                        <legend></legend>
                        <div class="spin cut"><input type="text" aria-label="偏移"><div class="spin-buttons"><button aria-label="增大"><svg><use href="#tri-up"/></svg></button><button aria-label="减小"><svg><use href="#tri-down"/></svg></button></div></div>
                    </fieldset>
                </div>
            </div>
        </div>
    </div>
    <div class="dialog-footer">
        <button class="button">确定</button>
        <button class="button">取消</button>
        <button class="button" disabled>应用(<u>A</u>)</button>
    </div>
</div>

</body>
</html>
```

FILE: styles.css
```css
* {
    box-sizing: border-box;
}
body {
    margin: 0;
    height: 100vh;
    display: flex;
    flex-direction: column;
    overflow: hidden;
    background: #0b4f9c;
    color: #000;
    font: 12px/14px "Open Sans", "Noto Sans CJK SC", sans-serif;
}
button, input, select {
    margin: 0;
    padding: 0;
    border: 0;
    background: none;
    color: inherit;
    font: inherit;
}
select {
    appearance: none;
    min-width: 0;
}
h1, h2, p, ul {
    margin: 0;
    padding: 0;
    font-weight: normal;
}
ul {
    list-style: none;
}
.defs {
    position: absolute;
    width: 0;
    height: 0;
}
.icon {
    width: 18px;
    height: 18px;
    flex: none;
    fill: none;
    stroke: #3c4048;
    display: block;
}
svg use[href="#logo"] {
    stroke: none;
}

/* Application window */
.app {
    flex: 1;
    min-height: 0;
    margin-bottom: 3px;
    display: flex;
    flex-direction: column;
    background: #bacbe5;
    border: 1px solid #8fa3bd;
    border-width: 1px 2px 0 2px;
    border-color: #8fa3bd #c8daf0;
    border-radius: 5px 5px 6px 6px;
}
.titlebar {
    height: 28px;
    display: flex;
    align-items: center;
    padding: 2px 4px 0;
    background: linear-gradient(#dfebf8, #dde8f4);
    border-radius: 5px 5px 0 0;
}
.titlebar h1 {
    flex: 1;
    text-align: center;
    font: 13px/16px "DejaVu Sans", "Noto Sans CJK SC", sans-serif;
    color: #7587ab;
    padding-right: 6px;
}
.win-buttons {
    display: flex;
    gap: 5px;
}
.win-buttons .icon {
    stroke: #5d6673;
}
.win-buttons.small {
    margin-left: auto;
    padding-right: 2px;
    gap: 0;
}
.win-buttons.small .icon {
    width: 15px;
    height: 15px;
}
.menubar {
    height: 24px;
    display: flex;
    align-items: center;
    gap: 1px;
    color: #2c3f63;
    font-family: "DejaVu Sans", "Noto Sans CJK SC", sans-serif;
}
.menubar > button {
    padding: 0 7px;
    white-space: nowrap;
}
.menubar .win-buttons button {
    padding: 0;
}

/* Toolbars */
.toolbar {
    height: 26px;
    align-self: flex-start;
    display: flex;
    align-items: center;
    background: linear-gradient(#f4f8fd, #d8e5f5);
    border-bottom: 1px solid #a4b4cc;
    border-radius: 4px;
}
.grip {
    flex: none;
    width: 2px;
    height: 16px;
    margin: 0 3px 0 5px;
    background: repeating-linear-gradient(#8b9ebd 0 2px, transparent 2px 4px);
}
.grip.flat {
    width: 15px;
    height: 2px;
    margin: 4px 0 3px;
    background: repeating-linear-gradient(90deg, #8b9ebd 0 2px, transparent 2px 4px);
}
.toolbar .grip {
    width: 2px;
    margin: 0 5px 0 4px;
}
.sep {
    flex: none;
    width: 1px;
    height: 15px;
    margin: 0 4px 0 3px;
    background: #98a8c2;
}
.tool {
    width: 23px;
    height: 22px;
    flex: none;
    display: grid;
    place-items: center;
}
.tool.wide {
    width: 28px;
}
.drop {
    width: 14px;
    height: 20px;
    flex: none;
    display: grid;
    place-items: center;
}
.drop svg {
    width: 8px;
    height: 6px;
}
.layer-box, .prop-box {
    height: 20px;
    display: flex;
    align-items: center;
    background: #fff;
}
.layer-box {
    width: 130px;
}
.layer-icons {
    width: 76px;
    height: 19px;
    flex: none;
    fill: none;
}
.layer-box select {
    width: 40px;
    overflow: hidden;
}
.prop-box {
    width: 105px;
}
.prop-box.color-box {
    width: 86px;
}
.prop-box select {
    flex: 1;
    padding-left: 4px;
}
.layer-box .drop, .prop-box .drop {
    background: #e6eefa;
}
.swatch {
    flex: none;
    width: 11px;
    height: 11px;
    border: 1px solid #3a6290;
}
.swatch.black {
    width: 9px;
    height: 9px;
    border: 0;
    margin: 0 2px 0 10px;
    background: #071122;
}
.line {
    flex: none;
    width: 32px;
    height: 1px;
    margin: 0 1px 0 6px;
    background: #b8202c;
}
.line.thick {
    width: 25px;
    height: 3px;
    margin: 0 5px 0 8px;
    background: #000;
}

/* Workspace */
.workspace {
    flex: 1;
    min-height: 0;
    display: grid;
    grid-template-columns: 77px 1fr;
    grid-template-rows: 1fr 26px;
}
.dock {
    display: flex;
    align-items: flex-start;
}
.tool-column {
    width: 26px;
    display: flex;
    flex-direction: column;
    align-items: center;
    background: linear-gradient(90deg, #f0f5fc, #d6e3f4);
    border-right: 1px solid #98abc8;
    border-radius: 4px;
    padding-bottom: 1px;
}
.tool-column.first {
    margin: 26px 1px 0 1px;
}
.tool-column.second {
    margin-top: 30px;
}
.tool-column button {
    height: 22px;
    display: grid;
    place-items: center;
}
.tool-column .letter {
    font: bold 19px/20px "Liberation Serif", serif;
}
.hr {
    width: 16px;
    height: 1px;
    margin: 3px 0 5px;
    background: #9eabc0;
}
.library-tab {
    width: 20px;
    height: 73px;
    margin: 4px 0 0 1px;
    display: flex;
    flex-direction: column;
    align-items: center;
    gap: 6px;
    background: linear-gradient(90deg, #fffbe2, #f5db84);
    border: 1px solid #b6a373;
    color: #5e5a4e;
}
.library-tab span {
    writing-mode: vertical-rl;
    text-orientation: sideways;
    line-height: 14px;
}
.document {
    display: flex;
    flex-direction: column;
    min-width: 0;
}
.doc-tabs {
    height: 24px;
    display: flex;
    align-items: flex-end;
    border-bottom: 1px solid #000;
    background: linear-gradient(#cfdff1, #e9f2fb);
    border-top: 1px solid #8297b5;
}
.doc-slope {
    width: 22px;
    height: 22px;
}
.doc-tab {
    height: 22px;
    padding: 0 14px;
    background: #fff;
    border-top: 1px solid #27374f;
    font: bold 12px/20px "Noto Sans CJK SC", sans-serif;
}
.doc-tabs .drop {
    margin-left: auto;
    margin-right: 5px;
}
.doc-tabs .drop svg {
    width: 12px;
    height: 9px;
}
.canvas {
    flex: 1;
    background: #fff;
    display: flex;
    align-items: flex-end;
}
.axis {
    width: 1px;
    height: 100%;
    margin-left: 108px;
    background: linear-gradient(transparent 60%, #000 60%);
}
.sheet-tabs {
    height: 17px;
    display: flex;
    align-items: center;
    background: #c8daec;
    border-top: 1px solid #8296ab;
}
.sheet-tabs button {
    width: 16px;
    height: 16px;
    display: grid;
    align-items: center;
    padding-left: 2px;
    fill: #35485f;
}
.sheet-tabs button svg {
    width: 10px;
    height: 10px;
}
.sheet {
    height: 16px;
    margin-left: 2px;
    padding-left: 9px;
    border-left: 1px solid #35485f;
    background: #fff;
    color: #24405f;
    font: bold 12px/15px "Noto Sans CJK SC", sans-serif;
}
.sheet-slope {
    width: 14px;
    height: 16px;
}
.command-grip {
    width: 34px;
    height: 25px;
    padding: 1px 0;
    display: flex;
    align-items: center;
    background: linear-gradient(#f0f5fb, #d9e6f5);
    border-radius: 3px;
}

/* Status bar */
.statusbar {
    height: 24px;
    display: flex;
    align-items: center;
    border-top: 1px solid #8496b0;
    background: linear-gradient(#e0e9f2, #b4c3d8);
    border-radius: 0 0 5px 5px;
    color: #25344d;
}
.command {
    width: 476px;
    padding-left: 9px;
}
.hint {
    width: 115px;
    padding-left: 14px;
    border-left: 1px solid #94a4ba;
}
.coords {
    flex: 1;
    font-size: 13px;
    color: #4b586e;
}
.modes {
    display: flex;
    align-items: center;
    gap: 10px;
    padding-right: 2px;
}
.modes button {
    white-space: nowrap;
}
.modes .active {
    padding: 1px 7px 2px;
    background: linear-gradient(#ffe9b4, #ffd679);
    border: 1px solid #c39a49;
    border-radius: 3px;
}
.modes button:nth-child(4) {
    margin-left: 9px;
}
.caret {
    width: 8px;
    height: 6px;
}
.resize {
    width: 12px;
    height: 12px;
    margin-left: -5px;
}

/* Taskbar */
.taskbar {
    position: relative;
    height: 31px;
    flex: none;
    display: flex;
    background: linear-gradient(#3a82ec, #2660d8 15%, #245edb 80%, #1d49a8);
    color: #fff;
}
.taskbar button svg {
    width: 17px;
    height: 17px;
    flex: none;
}
.start {
    width: 96px;
    flex: none;
    display: flex;
    align-items: center;
    gap: 5px;
    padding-left: 11px;
    border-radius: 0 10px 12px 0;
    background: linear-gradient(#62b25e, #3a983a 20%, #2f8a30 75%, #237024);
    font: italic 19px/24px "Noto Sans CJK SC", sans-serif;
    text-shadow: 1px 1px 2px #123f12;
}
.taskbar .start svg {
    width: 20px;
    height: 20px;
}
.quick {
    width: 479px;
    flex: none;
    display: flex;
    align-items: center;
    padding-left: 10px;
}
.quick button {
    width: 23px;
    height: 23px;
    flex: none;
    display: grid;
    place-items: center;
}
.quick .ps {
    width: 17px;
    height: 17px;
    margin: 0 3px;
    background: #123460;
    color: #b9e1f9;
    font-size: 10px;
}
.more {
    margin: -10px 0 0 17px;
    font-size: 16px;
}
.task {
    width: 94px;
    flex: none;
    display: flex;
    align-items: center;
    gap: 4px;
    padding-left: 7px;
    margin: 3px 2px 2px 0;
    border-radius: 3px;
    background: linear-gradient(#5a94f4, #3c78ec 20%, #376fe4);
    font: 12px/14px "Liberation Mono", monospace;
}
.tray {
    flex: 1;
    margin-left: 12px;
    display: flex;
    align-items: center;
    background: linear-gradient(#34b3f5, #1291e9 20%, #128ce6 85%, #0f6fbf);
}
.tray svg {
    width: 104px;
    height: 30px;
    flex: none;
    overflow: visible;
}
.tray span {
    margin-left: auto;
    padding-right: 12px;
}
.watermark {
    position: absolute;
    right: 13px;
    top: 4px;
    color: #000;
    font: 14px/20px "Open Sans", "Noto Sans CJK SC", sans-serif;
    white-space: nowrap;
    text-shadow: 1px 1px 0 #c4e2f8;
}

/* Dialog */
.dialog {
    position: absolute;
    left: 163px;
    top: 97px;
    width: 699px;
    background: #ece9d8;
    border: 3px solid #6b74cb;
    border-top: 0;
    border-radius: 7px 7px 0 0;
}
.dialog-title {
    height: 27px;
    margin: 0 -3px;
    padding: 0 4px 0 7px;
    display: flex;
    align-items: center;
    justify-content: space-between;
    background: linear-gradient(#6279c7, #8099e6 12%, #7b93e0 50%, #82a6ec 90%, #7896df);
    border-radius: 7px 7px 0 0;
}
.dialog-title h2 {
    color: #dbe6fb;
    font: bold 14px/18px "Noto Sans CJK SC", sans-serif;
}
.close {
    width: 21px;
    height: 21px;
    display: grid;
    place-items: center;
    border: 1px solid #e3d9ec;
    border-radius: 3px;
    background: #ba6b7c;
}
.close svg {
    width: 17px;
    height: 17px;
}
.dialog-body {
    display: grid;
    grid-template-columns: 186px 1fr;
    gap: 7px;
    padding: 12px 11px 0;
}
.style-list {
    display: flex;
    flex-direction: column;
}
.style-list p {
    height: 32px;
    line-height: 22px;
}
.tree {
    flex: 1;
    background: #fff;
    border: 1px solid #7f9db9;
    padding: 1px 9px;
    line-height: 16px;
}
.tree ul {
    margin-left: 23px;
}
.tree ul li::before {
    content: "";
    display: inline-block;
    width: 9px;
    height: 8px;
    margin-right: 1px;
    vertical-align: 3px;
    border-left: 1px dotted #999;
    border-bottom: 1px dotted #999;
}
.toggle {
    width: 9px;
    height: 9px;
    margin-right: 7px;
    vertical-align: -1px;
    border: 1px solid #8296a8;
    background: linear-gradient(#333, #333) center / 5px 1px no-repeat #eee;
}
.selected {
    display: inline-block;
    padding: 0 5px 0 1px;
    background: #ece9d8;
}
.actions {
    display: grid;
    grid-template-columns: 126px 122px 115px 72px;
    gap: 5px 0;
    padding-left: 22px;
}
.button {
    width: 72px;
    height: 20px;
    border: 1px solid #003c74;
    border-radius: 3px;
    background: linear-gradient(#fff, #f5f4ee 80%, #dcd6ca);
    line-height: 14px;
    white-space: nowrap;
}
.button:disabled {
    color: #a6a493;
    border-color: #c9c7ba;
    background: #f3f2e9;
}
.panel {
    height: 392px;
    margin: 5px 0 3px;
    padding: 25px 0 0 28px;
    display: grid;
    grid-template-columns: 189px 191px;
    gap: 18px;
    border: 2px solid #7d7a6e;
    border-right: 1px solid #fff;
    border-bottom: 1px solid #fff;
}
.cut-title {
    height: 4px;
    margin-left: 13px;
    overflow: hidden;
    color: #0046d5;
}
.column:last-child .cut-title {
    margin: 0 0 3px 8px;
}
fieldset {
    min-width: 0;
    margin: 0;
    padding: 0;
    border: 1px solid #d0d0bf;
    border-radius: 4px;
}
legend {
    padding: 0 3px;
    color: #0046d5;
}
.field {
    display: grid;
    grid-template-columns: 76px 92px;
    align-items: center;
    margin-bottom: 6px;
}
.field label {
    font-family: "Noto Sans CJK TC", sans-serif;
}
.arrow-group {
    height: 237px;
    margin-top: 72px;
    padding: 3px 0 0 7px;
}
.check {
    display: flex;
    align-items: center;
    gap: 2px;
    height: 14px;
    margin: 0 0 120px 2px;
}
.check input {
    appearance: none;
    width: 13px;
    height: 13px;
    border: 1px solid #1c5180;
    background: #f4f8f4;
}
.check svg {
    width: 13px;
    height: 13px;
    margin-left: -15px;
}
.arrow-group .field:nth-of-type(1) {
    margin-bottom: 4px;
}
.combo {
    height: 21px;
    display: flex;
    align-items: center;
    background: #fff;
    border: 1px solid #7f9db9;
    padding: 1px;
}
.combo.tall {
    height: 24px;
}
.combo select {
    flex: 1;
    padding-left: 2px;
}
.combo.color select {
    font-size: 11px;
}
.combo .swatch {
    margin: 0 3px 0 9px;
}
.combo-arrow {
    flex: none;
    width: 15px;
    height: 100%;
    display: grid;
    place-items: center;
    border-radius: 2px;
    background: linear-gradient(90deg, #d2e0fd, #b4c9f6);
}
.combo-arrow svg {
    width: 10px;
    height: 8px;
}
.arrow-pic {
    width: 14px;
    height: 14px;
    flex: none;
    margin: 0 3px 0 2px;
}
.spin {
    height: 23px;
    display: flex;
    gap: 2px;
}
.spin input {
    flex: 1;
    min-width: 0;
    padding: 0 3px 3px;
    background: #fff;
    border: 1px solid #7f9db9;
    font-size: 11px;
}
.spin-buttons {
    width: 16px;
    display: flex;
    flex-direction: column;
    gap: 1px;
    padding: 1px;
    background: #fff;
}
.spin-buttons button {
    flex: 1;
    display: grid;
    place-items: center;
    background: linear-gradient(90deg, #d2e0fd, #b4c9f6);
    border-radius: 2px;
}
.spin-buttons svg {
    width: 8px;
    height: 4px;
}
.base-group {
    height: 100px;
    display: flex;
    flex-direction: column;
    align-items: flex-end;
    gap: 5px;
    padding: 8px 10px;
}
.combo.cut {
    width: 25px;
    border-left: 0;
}
.spin.cut {
    width: 21px;
}
.spin.cut input {
    padding: 0;
    border-left: 0;
}
.base-group .spin {
    margin: 6px 3px 0 0;
}
.text-group {
    height: 127px;
    margin-top: 11px;
    padding: 1px 0 0 5px;
}
.text-group .field {
    grid-template-columns: 78px 93px;
}
.note {
    width: 26px;
    height: 14px;
    margin: -1px 0 14px 148px;
    display: flex;
    justify-content: flex-end;
    overflow: hidden;
    white-space: nowrap;
}
.offset-group {
    height: 57px;
    margin-top: 11px;
    padding: 26px 11px 0 0;
    display: flex;
    justify-content: flex-end;
    border-left: 0;
}
.offset-group legend {
    width: 155px;
    height: 1px;
    padding: 0;
}
.offset-group .spin {
    width: 25px;
}
.dialog-footer {
    display: flex;
    justify-content: flex-end;
    gap: 6px;
    padding: 10px 11px 23px;
}
.dialog-footer .button {
    width: 73px;
    height: 21px;
}
.dialog-footer .button:disabled {
    width: 72px;
}
```
